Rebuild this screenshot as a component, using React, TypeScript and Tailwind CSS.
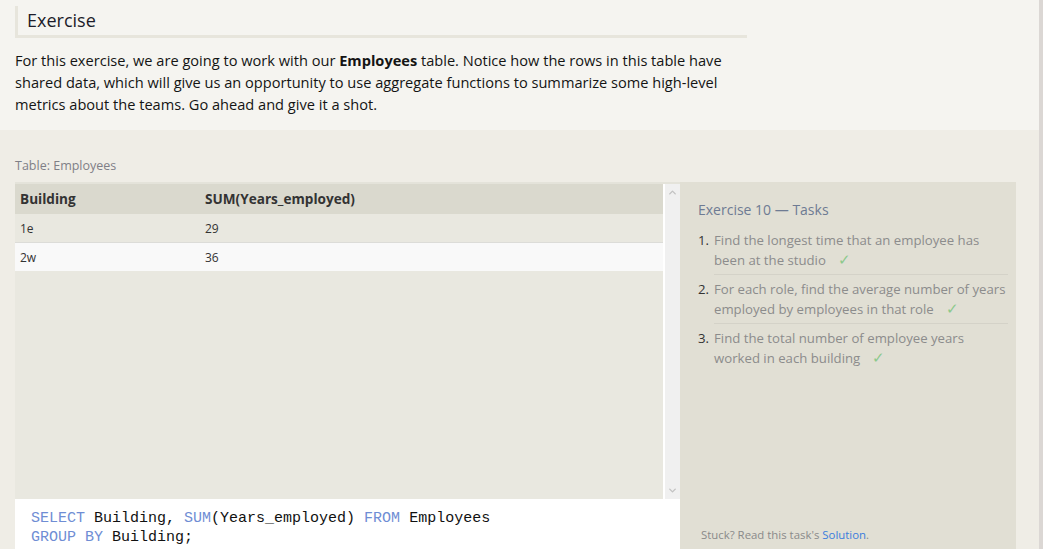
import { ChevronUp, ChevronDown } from "lucide-react"

const tasks = [
  ["Find the longest time that an employee has", "been at the studio"],
  ["For each role, find the average number of years", "employed by employees in that role"],
  ["Find the total number of employee years", "worked in each building"],
]

const rows = [
  { building: "1e", total: "29" },
  { building: "2w", total: "36" },
]

export default function App() {
  return (
    <div className="flex h-[549px] w-[1043px] overflow-hidden font-['Open_Sans',sans-serif]">
      <div className="flex w-[1039px] flex-col">
        {/* Intro */}
        <div className="h-[130px] shrink-0 bg-[#f5f4f0] pl-[15px] pt-[6px]">
          <div className="w-[732px] border-b-[3px] border-l-[3px] border-[#e7e5dc] pb-[4px] pl-[9px] pt-[3px]">
            <h2 className="text-[18px] leading-[22px] text-[#1c1c2a]">Exercise</h2>
          </div>
          <p className="mt-[11px] w-[740px] text-[14.6px] leading-[22px] text-[#141414]">
            For this exercise, we are going to work with our <b>Employees</b> table. Notice how the rows in this table have
            <br />
            shared data, which will give us an opportunity to use aggregate functions to summarize some high-level
            <br />
            metrics about the teams. Go ahead and give it a shot.
          </p>
        </div>

        {/* Workspace */}
        <div className="flex flex-1 flex-col bg-[#efede6] pl-[15px]">
          <div className="pt-[27px] text-[12.5px] leading-[18px] text-[#7f7f86]">Table: Employees</div>
          <div className="mt-[7px] flex flex-1">
            <div className="flex w-[665px] flex-col">
              <div className="flex h-[317px] border-t-2 border-[#e4e3da]">
                <div className="flex-1 bg-[#e9e8e0]">
                  <div className="flex h-[30px] items-center bg-[#dad9ce] text-[13.6px] font-bold text-[#333]">
                    <span className="w-[190px] pl-[5px]">Building</span>
                    <span>SUM(Years_employed)</span>
                  </div>
                  {rows.map((r, i) => (
                    <div
                      key={r.building}
                      className={
                        i === 0
                          ? "flex h-[29px] items-center border-b border-[#dcdcd8] bg-[#e9e8e0] pt-[1px] text-[12px] text-[#333]"
                          : "flex h-[28px] items-center bg-[#f9f9f9] pt-[1px] text-[12px] text-[#333]"
                      }
                    >
                      <span className="w-[190px] pl-[5px]">{r.building}</span>
                      <span>{r.total}</span>
                    </div>
                  ))}
                </div>
                <div className="flex w-[17px] flex-col items-center justify-between border-l-2 border-white bg-[#f0f0f0] py-[3px] text-[#c2c2c2]">
                  <ChevronUp size={11} strokeWidth={3} />
                  <ChevronDown size={11} strokeWidth={3} />
                </div>
              </div>
              <div className="flex-1 bg-white pl-[16px] pt-[10px] font-['Liberation_Mono',monospace] text-[15px] leading-[19px] text-[#111]">
                <div>
                  <span className="text-[#6f8dd4]">SELECT</span> Building, <span className="text-[#6f8dd4]">SUM</span>(Years_employed){" "}
                  <span className="text-[#6f8dd4]">FROM</span> Employees
                </div>
                <div>
                  <span className="text-[#6f8dd4]">GROUP BY</span> Building;
                </div>
              </div>
            </div>

            {/* Tasks */}
            <div className="flex w-[336px] flex-col justify-between bg-[#e1dfd4] pb-[5px] pl-[18px] pr-[8px] pt-[18px]">
              <div>
                <h3 className="text-[14px] leading-[20px] text-[#6e7b93]">Exercise 10 — Tasks</h3>
                <ol className="mt-[10px]">
                  {tasks.map((t, i) => (
                    <li key={i} className="flex text-[13.2px] leading-[20px]">
                      <span className="w-[16px] text-[#333]">{i + 1}.</span>
                      <div
                        className={
                          i < tasks.length - 1
                            ? "flex-1 border-b border-[#d4d2c8] pb-[4px] mb-[4px] text-[#8c8c8c]"
                            : "flex-1 text-[#8c8c8c]"
                        }
                      >
                        <div>{t[0]}</div>
                        <div>
                          {t[1]}
                          <span className="ml-[12px] text-[15px] leading-[18px] text-[#8cc98c]">✓</span>
                        </div>
                      </div>
                    </li>
                  ))}
                </ol>
              </div>
              <div className="pl-[3px] text-[11.4px] leading-[18px] text-[#8a8a8a]">
                Stuck? Read this task's <span className="text-[#3b7ddd]">Solution</span>.
              </div>
            </div>
            <div className="flex-1" />
          </div>
        </div>
      </div>
      <div className="w-[4px] bg-[#dbd7d4]" />
    </div>
  )
}
